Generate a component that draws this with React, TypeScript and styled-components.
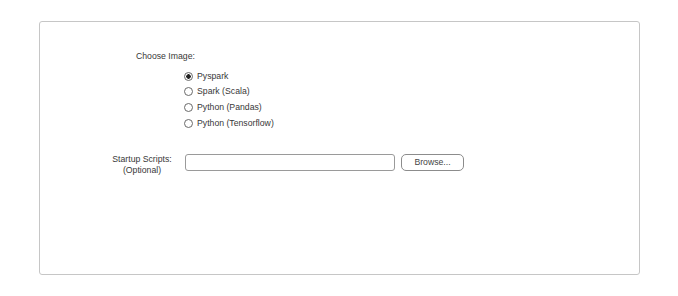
import React from "react";
import styled, { createGlobalStyle } from "styled-components";

const images = ["Pyspark", "Spark (Scala)", "Python (Pandas)", "Python (Tensorflow)"];

const App: React.FunctionComponent<{}> = () => {
  const [selected, setSelected] = React.useState(images[0]);
  return (
    <>
      <GlobalStyle />
      <FrameStyled>
        <HeadingStyled>Choose Image:</HeadingStyled>
        <RadioListStyled>
          {images.map(name => (
            <RadioRowStyled key={name}>
              <RadioStyled
                type="radio"
                name="image"
                checked={selected === name}
                onChange={() => setSelected(name)}
              />
              {name}
            </RadioRowStyled>
          ))}
        </RadioListStyled>

        <ScriptRowStyled>
          <ScriptLabelStyled>
            Startup Scripts:
            <br />
            (Optional)
          </ScriptLabelStyled>
          <PathInputStyled type="text" />
          <BrowseButtonStyled>Browse...</BrowseButtonStyled>
        </ScriptRowStyled>
      </FrameStyled>
    </>
  );
};

const GlobalStyle = createGlobalStyle`
  body {
    margin: 0;
    background: #ffffff;
    font-family: "Liberation Sans", Arial, sans-serif;
    color: #383838;
  }
`;

const FrameStyled = styled.div`
  box-sizing: border-box;
  width: 601px;
  height: 254px;
  margin: 21px 0 0 39px;
  padding-top: 29px;
  border: 1px solid #c6c6c6;
  border-radius: 3px;
  font-size: 8.7px;
  line-height: 11px;
`;

const HeadingStyled = styled.div`
  padding-left: 96px;
`;

const RadioListStyled = styled.div`
  display: flex;
  flex-direction: column;
  margin-top: 6.5px;
  padding-left: 144px;
`;

const RadioRowStyled = styled.label`
  display: flex;
  align-items: center;
  gap: 4px;
  height: 15.6px;
`;

const RadioStyled = styled.input`
  appearance: none;
  box-sizing: border-box;
  width: 9px;
  height: 9px;
  margin: 0;
  border: 1px solid #6a6a6a;
  border-radius: 50%;
  background: #ffffff;

  &:checked {
    background: radial-gradient(circle, #222222 0 2px, #ffffff 2.5px);
  }
`;

const ScriptRowStyled = styled.div`
  display: flex;
  align-items: flex-start;
  margin-top: 23px;
  padding-left: 59px;
`;

const ScriptLabelStyled = styled.div`
  width: 86px;
  text-align: center;
`;

const PathInputStyled = styled.input`
  box-sizing: border-box;
  width: 210px;
  height: 17px;
  margin: 0;
  border: 1px solid #9a9a9a;
  border-radius: 3px;
  background: #ffffff;
`;

const BrowseButtonStyled = styled.button`
  box-sizing: border-box;
  width: 63px;
  height: 17px;
  margin-left: 6px;
  padding: 0;
  border: 1px solid #8c8c8c;
  border-radius: 5px;
  background: #ffffff;
  color: #444444;
  font-family: "Liberation Sans", Arial, sans-serif;
  font-size: 8.7px;
`;

export default App;
